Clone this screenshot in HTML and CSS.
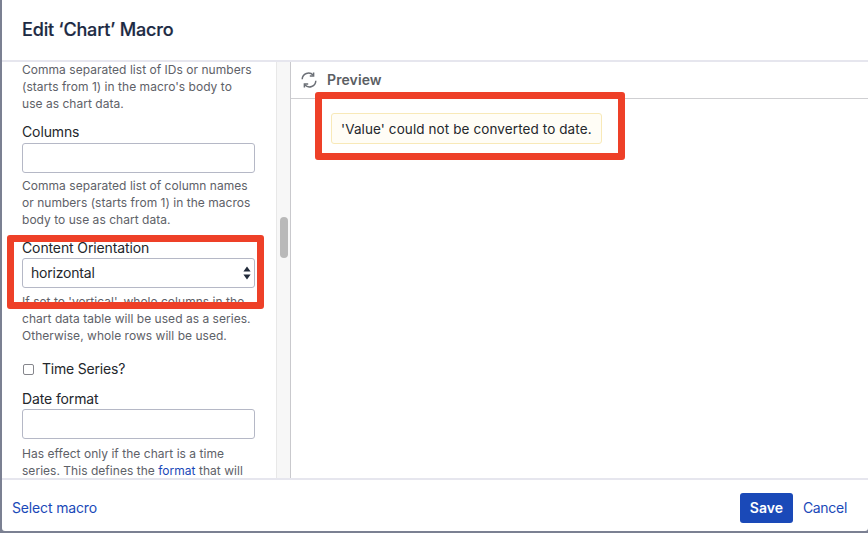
FILE: index.html
```html
<!DOCTYPE html>
<html lang="en">
<head>
<meta charset="utf-8">
<title>Edit Chart Macro</title>
<link rel="stylesheet" href="styles.css">
</head>
<body>
<div class="dialog">
  <header class="head"><h1>Edit ‘Chart’ Macro</h1></header>
  <div class="main">
    <div class="form">
      <p class="help">Comma separated list of IDs or numbers (starts from 1) in the macro's body to use as chart data.</p>
      <label class="lab">Columns</label>
      <div class="input"></div>
      <p class="help">Comma separated list of column names or numbers (starts from 1) in the macros body to use as chart data.</p>
      <label class="lab">Content Orientation</label>
      <div class="input select">horizontal
        <svg class="updown" width="8" height="14" viewBox="0 0 8 14"><path d="M4 0.5 7.6 5.5H.4ZM4 13.5 .4 8.5H7.6Z" fill="#222b3a"/></svg>
      </div>
      <p class="help">If set to 'vertical', whole columns in the chart data table will be used as a series. Otherwise, whole rows will be used.</p>
      <div class="check"><span class="box"></span>Time Series?</div>
      <label class="lab">Date format</label>
      <div class="input date"></div>
      <p class="help clip">Has effect only if the chart is a time series. This defines the <a>format</a> that will</p>
    </div>
    <div class="track"><div class="thumb"></div></div>
    <div class="preview">
      <div class="pv-head">
        <svg width="16" height="16" viewBox="0 0 16 16" fill="none" stroke="#6b6f76" stroke-width="1.5"><path d="M1.2 7.2A6.3 6.3 0 0 1 12.2 3.2"/><path d="M14.8 8.8A6.3 6.3 0 0 1 3.8 12.8"/><path d="M12.6 .4V4H8.8"/><path d="M3.4 15.6V12H7.2"/></svg>
        <span>Preview</span>
      </div>
      <div class="pv-body"><div class="msg">'Value' could not be converted to date.</div></div>
    </div>
  </div>
  <footer class="foot">
    <a class="sel">Select macro</a>
    <span class="acts"><button class="save">Save</button><a class="cancel">Cancel</a></span>
  </footer>
</div>
<div class="mark mark-left"></div>
<div class="mark mark-right"></div>
</body>
</html>
```
FILE: styles.css
```css
html, body { margin: 0; height: 533px; overflow: hidden; }
body { background: #7b8092; font-family: Inter, "Liberation Sans", sans-serif; color: #172b4d; position: relative; }
.dialog { margin-left: 2px; height: 531px; background: #fff; display: flex; flex-direction: column; border-radius: 0 0 3px 3px; overflow: hidden; }
.head { box-sizing: border-box; padding: 19px 0 0 20px; border-bottom: 2px solid #e6e6ee; flex: none; height: 62px; }
h1 { margin: 0; font-size: 18px; line-height: 22px; font-weight: 500; color: #1c2a43; letter-spacing: -.17px; -webkit-text-stroke: .2px #1c2a43; }
.main { flex: 1; display: flex; min-height: 0; }
.form { width: 274px; box-sizing: border-box; padding: 0 20px; overflow: hidden; flex: none; }
.help { margin: 0; width: 231px; font-size: 12px; line-height: 17px; letter-spacing: .03px; color: #5e6168; }
.form > .help:first-child { margin-top: -1px; }
.lab { display: block; font-size: 14px; line-height: 18px; letter-spacing: -.12px; color: #24272c; }
.input { box-sizing: border-box; width: 233px; height: 30px; border: 1px solid #b5b8c6; border-radius: 3px; background: #fff; margin: 2px 0 4px; }
.date { margin-top: 1px; }
.help + .lab { margin-top: 11px; }
.select { position: relative; font-size: 14px; line-height: 28px; padding-left: 8px; letter-spacing: -.2px; color: #24272c; margin: 1px 0 5px; }
.updown { position: absolute; right: 3px; top: 7px; }
.check { display: flex; align-items: center; font-size: 14px; line-height: 18px; letter-spacing: -.2px; color: #24272c; margin: 16px 0 12px; }
.box { box-sizing: border-box; width: 11px; height: 11px; border: 1px solid #85868c; border-radius: 2px; margin: 0 8px 0 1px; }
.clip { margin-top: 6px; }
a { color: #1a49b8; }
.track { width: 14px; flex: none; background: #f7f7f7; border-left: 1px solid #e8e8e8; box-sizing: border-box; position: relative; }
.thumb { position: absolute; left: 3px; top: 155px; width: 8px; height: 41px; background: #b9b9b9; border-radius: 4px; }
.preview { flex: 1; border-left: 1px solid #c9c9cd; min-width: 0; }
.pv-head { height: 37px; box-sizing: border-box; border-bottom: 1px solid #cfcfd2; display: flex; align-items: center; padding: 0 0 1px 10px; font-size: 14px; font-weight: 600; letter-spacing: .1px; color: #5b5e63; }
.pv-head span { margin-left: 10px; }
.pv-body { padding: 14px 40px; }
.msg { display: inline-block; box-sizing: border-box; height: 31px; line-height: 30px; padding: 0 9px; font-size: 13.5px; letter-spacing: .1px; color: #24272c; background: #fffdf6; border: 1px solid #f8e9b8; border-radius: 3px; }
.foot { height: 53px; flex: none; box-sizing: border-box; border-top: 2px solid #e6e6ee; display: flex; align-items: center; justify-content: space-between; padding: 4px 21px 0 10px; font-size: 14px; letter-spacing: -.15px; }
.acts { display: flex; align-items: center; gap: 10px; }
.cancel { letter-spacing: -.3px; }
.save { width: 53px; height: 30px; border: 0; border-radius: 3px; background: #1a49b8; color: #fff; font: 600 14px Inter, "Liberation Sans", sans-serif; padding: 0; }
.mark { position: absolute; box-sizing: border-box; border: 7px solid #ee4028; border-radius: 3px; }
.mark-left { left: 7px; top: 235px; width: 257px; height: 74px; }
.mark-right { left: 315px; top: 92px; width: 310px; height: 68px; }
```
